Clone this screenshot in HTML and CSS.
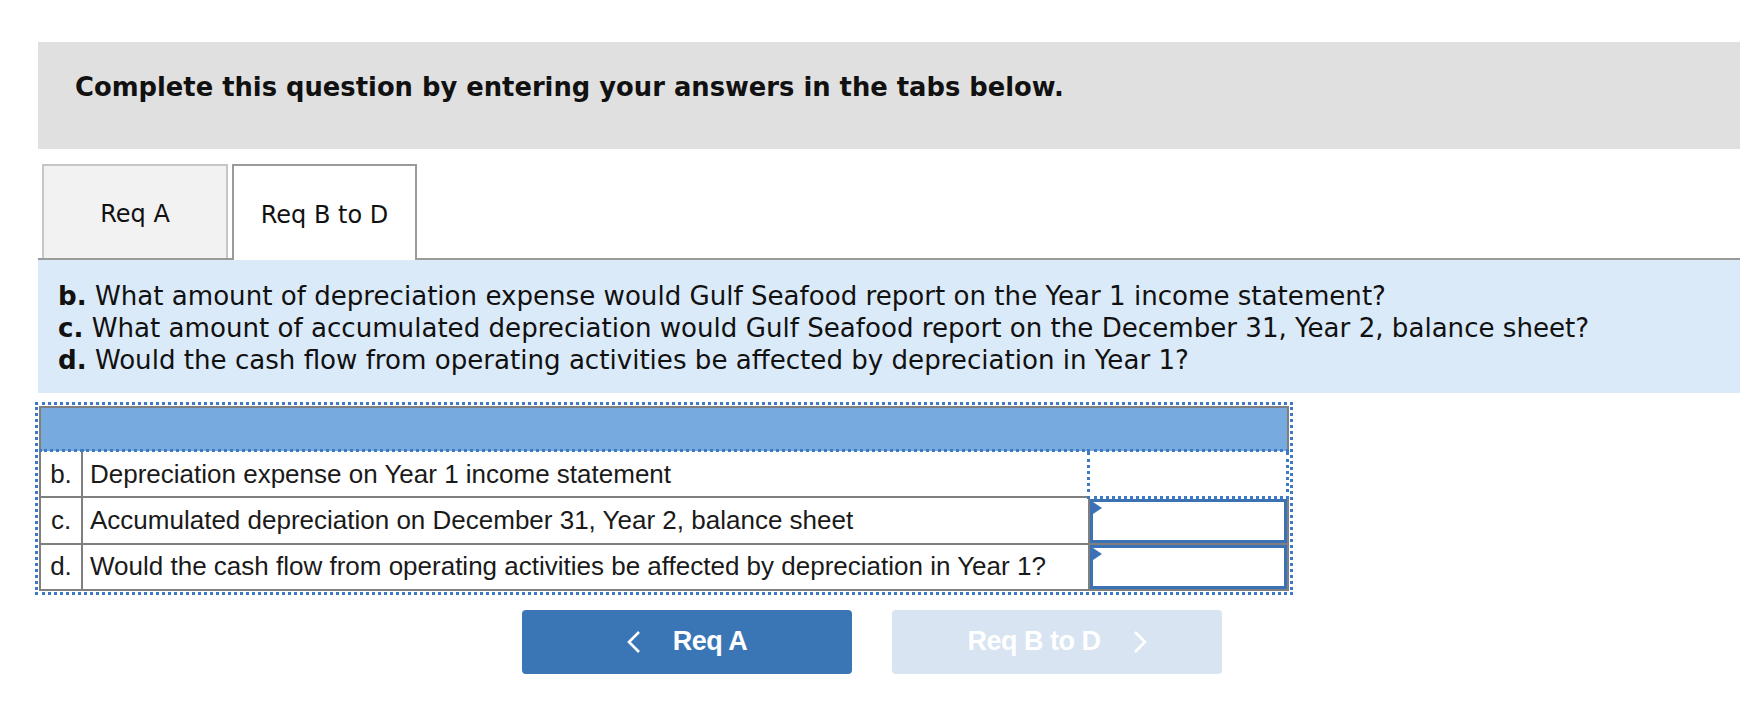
FILE: index.html
```html
<!DOCTYPE html>
<html>
<head>
<meta charset="utf-8">
<link rel="stylesheet" href="styles.css">
</head>
<body>
<div class="page">
  <div class="banner">Complete this question by entering your answers in the tabs below.</div>
  <div class="tabs">
    <div class="tab">Req A</div>
    <div class="tab active">Req B to D</div>
  </div>
  <div class="questions">
    <p><b>b.</b> What amount of depreciation expense would Gulf Seafood report on the Year 1 income statement?</p>
    <p><b>c.</b> What amount of accumulated depreciation would Gulf Seafood report on the December 31, Year 2, balance sheet?</p>
    <p><b>d.</b> Would the cash flow from operating activities be affected by depreciation in Year 1?</p>
  </div>
  <div class="grid-wrap">
    <table class="grid">
      <tr class="head"><td colspan="3"></td></tr>
      <tr>
        <td class="lbl">b.</td>
        <td class="desc">Depreciation expense on Year 1 income statement</td>
        <td class="ans focus"></td>
      </tr>
      <tr>
        <td class="lbl">c.</td>
        <td class="desc">Accumulated depreciation on December 31, Year 2, balance sheet</td>
        <td class="ans"><div class="input"><span class="flag"></span></div></td>
      </tr>
      <tr>
        <td class="lbl">d.</td>
        <td class="desc">Would the cash flow from operating activities be affected by depreciation in Year 1?</td>
        <td class="ans"><div class="input"><span class="flag"></span></div></td>
      </tr>
    </table>
  </div>
  <div class="nav">
    <div class="btn prev">
      <svg class="chev" width="14" height="22" viewBox="0 0 14 22"><polyline points="12,1 2,11 12,21" fill="none" stroke="#fff" stroke-width="2.6"/></svg>
      <span>Req A</span>
    </div>
    <div class="btn next">
      <span>Req B to D</span>
      <svg class="chev" width="14" height="22" viewBox="0 0 14 22"><polyline points="2,1 12,11 2,21" fill="none" stroke="#fff" stroke-width="2.6"/></svg>
    </div>
  </div>
</div>
</body>
</html>
```
FILE: styles.css
```css
html, body {
  margin: 0;
  padding: 0;
  background: #ffffff;
}
.page {
  margin: 42px 0 0 38px;
  width: 1702px;
}
.banner {
  box-sizing: border-box;
  height: 107px;
  background: #e0e0e0;
  padding: 30px 0 0 37px;
  font-family: "DejaVu Sans", Verdana, sans-serif;
  font-weight: bold;
  font-size: 25.8px;
  color: #111;
}
.tabs {
  display: flex;
  gap: 4px;
  margin-top: 15px;
  padding-left: 4px;
  border-bottom: 2px solid #9a9a9a;
  height: 94px;
}
.tab {
  box-sizing: border-box;
  width: 186px;
  height: 94px;
  background: #f2f2f2;
  border: 2px solid #c6c6c6;
  border-bottom: none;
  display: flex;
  align-items: center;
  justify-content: center;
  font-family: "DejaVu Sans", Verdana, sans-serif;
  font-size: 24px;
  color: #111;
  padding-top: 4px;
}
.tab.active {
  background: #fff;
  border-color: #9a9a9a;
  height: 96px;
  margin-bottom: -2px;
  width: 185px;
}
.questions {
  box-sizing: border-box;
  height: 133px;
  background: #dbeaf9;
  padding: 20px 0 0 20px;
  font-family: "DejaVu Sans", Verdana, sans-serif;
  font-size: 26.1px;
  color: #111;
}
.questions p {
  margin: 0;
  line-height: 32px;
}
.grid-wrap {
  box-sizing: border-box;
  width: 1258px;
  margin: 9px 0 0 -3px;
  border: 3px dotted #3d7ac2;
  padding: 1px;
}
.grid {
  width: 100%;
  border-collapse: collapse;
  border: 2px solid #7f7f7f;
  font-family: "Liberation Sans", Arial, sans-serif;
  font-size: 26px;
  color: #1a1a1a;
}
.grid td {
  padding: 0;
}
.head td {
  height: 41px;
  background: #77abe0;
  border-bottom: 3px dotted #3d7ac2;
}
.lbl {
  width: 40px;
  height: 44px;
  text-align: center;
  border-right: 2px solid #7f7f7f;
  border-bottom: 2px solid #7f7f7f;
}
.desc {
  padding-left: 7px !important;
  border-bottom: 2px solid #7f7f7f;
}
.ans {
  width: 196px;
  border-left: 2px solid #7f7f7f;
  border-bottom: 2px solid #7f7f7f;
}
.ans.focus {
  border: 3px dotted #3d7ac2;
}
.input {
  position: relative;
  box-sizing: border-box;
  height: 44px;
  border: 3px solid #3b72b5;
  background: #fff;
}
.flag {
  position: absolute;
  left: 0;
  top: 0;
  width: 0;
  height: 0;
  border-top: 6px solid transparent;
  border-bottom: 6px solid transparent;
  border-left: 9px solid #3b72b5;
}
.nav {
  display: flex;
  gap: 40px;
  margin: 15px 0 0 484px;
}
.btn {
  box-sizing: border-box;
  width: 330px;
  height: 64px;
  border-radius: 4px;
  display: flex;
  align-items: center;
  justify-content: center;
  gap: 32px;
  font-family: "Liberation Sans", Arial, sans-serif;
  font-weight: bold;
  font-size: 27px;
  letter-spacing: -0.5px;
  color: #fff;
}
.btn.prev {
  background: #3a76b6;
}
.btn.next {
  background: #d8e4f2;
}
.chev {
  display: block;
}
```
